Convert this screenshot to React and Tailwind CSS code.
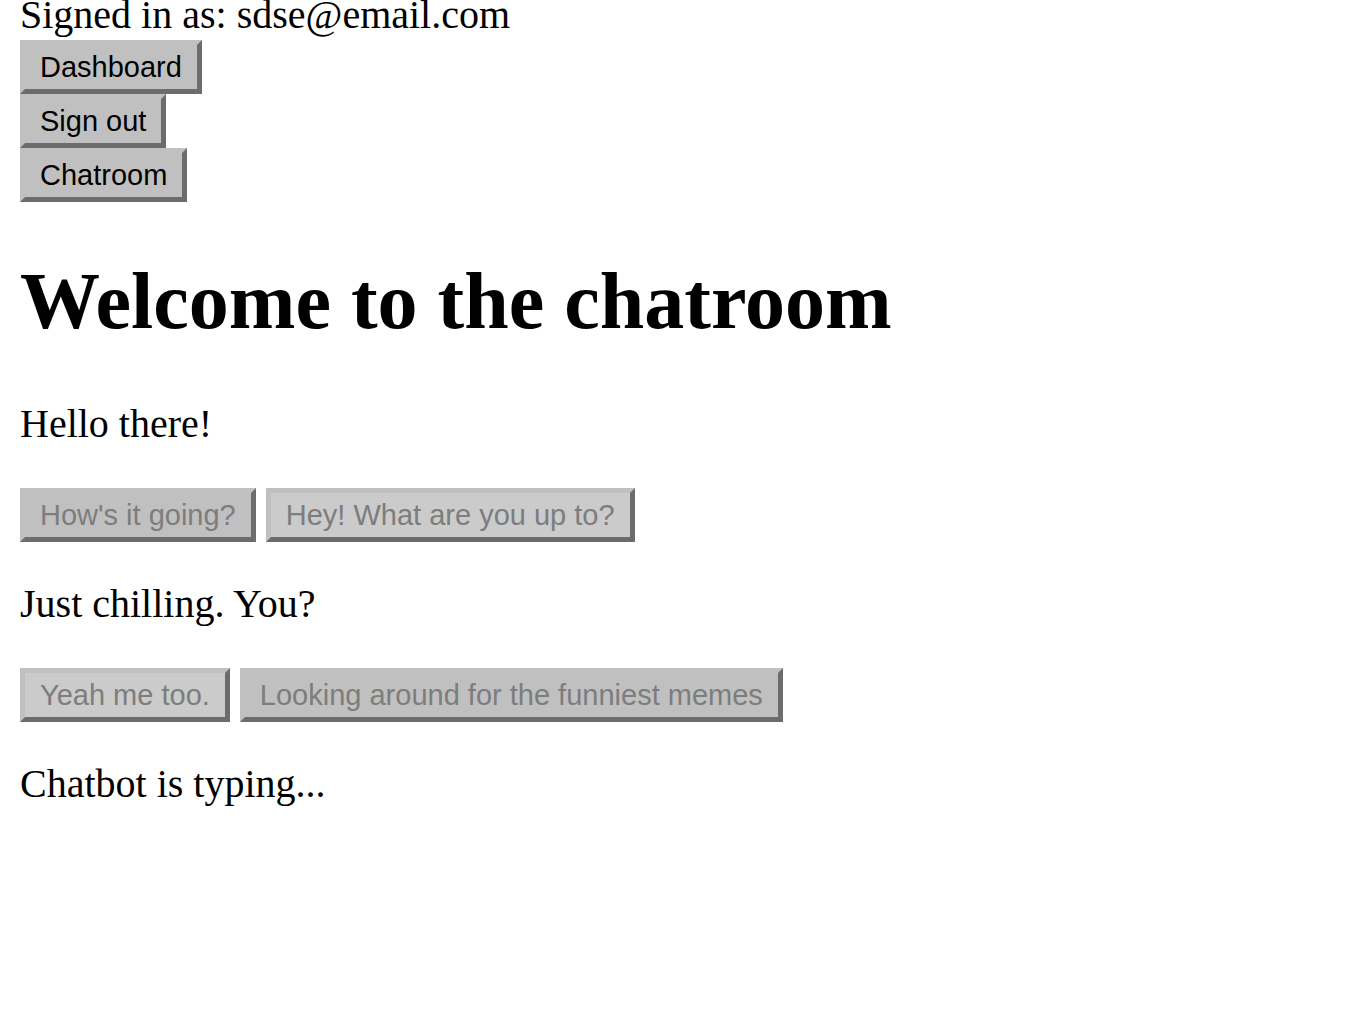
import React from "react";

function Btn({ children, dim, light }) {
  return (
    <button
      className={
        "h-[54px] px-[15px] flex items-center border-[5px] border-t-[#c0c0c0] border-l-[#c0c0c0] border-b-[#6c6c6c] border-r-[#6c6c6c] text-[29px] leading-[32px] font-['Liberation_Sans',Arial,sans-serif] whitespace-nowrap " +
        (light ? "bg-[#cbcbcb] " : "bg-[#c0c0c0] ") +
        (dim ? "text-[#7d7d7d]" : "text-black")
      }
    >
      {children}
    </button>
  );
}

export default function App() {
  return (
    <div className="bg-white min-h-[1026px] pl-[20px] text-black font-['Liberation_Serif','Times_New_Roman',serif]">
      <div className="text-[40px] leading-[30px] h-[40px] pt-0 whitespace-nowrap">Signed in as: sdse@email.com</div>
      <div className="flex flex-col items-start">
        <Btn>Dashboard</Btn>
        <Btn>Sign out</Btn>
        <Btn>Chatroom</Btn>
      </div>
      <h1 className="mt-[53px] text-[80px] leading-[92px] font-bold whitespace-nowrap">Welcome to the chatroom</h1>
      <p className="mt-[54px] text-[40px] leading-[46px]">Hello there!</p>
      <div className="mt-[41px] flex gap-[10px] items-start">
        <Btn dim>How's it going?</Btn>
        <Btn dim light>Hey! What are you up to?</Btn>
      </div>
      <p className="mt-[39px] text-[40px] leading-[46px]">Just chilling. You?</p>
      <div className="mt-[41px] flex gap-[10px] items-start">
        <Btn dim light>Yeah me too.</Btn>
        <Btn dim>Looking around for the funniest memes</Btn>
      </div>
      <p className="mt-[39px] text-[40px] leading-[46px]">Chatbot is typing...</p>
    </div>
  );
}
